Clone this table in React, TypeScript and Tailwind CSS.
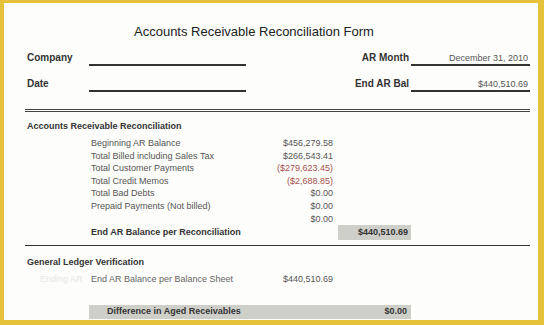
const items: { label: string; amount: string; red?: boolean }[] = [
  { label: "Beginning AR Balance", amount: "$456,279.58" },
  { label: "Total Billed including Sales Tax", amount: "$266,543.41" },
  { label: "Total Customer Payments", amount: "($279,623.45)", red: true },
  { label: "Total Credit Memos", amount: "($2,688.85)", red: true },
  { label: "Total Bad Debts", amount: "$0.00" },
  { label: "Prepaid Payments (Not billed)", amount: "$0.00" },
  { label: "", amount: "$0.00" },
]

function HeaderRow({
  left,
  right,
  value,
  className = "",
}: {
  left: string
  right: string
  value: string
  className?: string
}) {
  return (
    <div className={`flex h-[14px] ${className}`}>
      <div className="w-[64px] pl-[2px] text-[10px] font-bold leading-[12px] text-[#333]">{left}</div>
      <div className="h-[14px] w-[157px] border-b-2 border-[#333]" />
      <div className="flex-1 pr-[2px] text-right text-[10px] font-bold leading-[12px] text-[#333]">{right}</div>
      <div className="h-[14px] w-[119px] border-b-2 border-[#333] pr-[2px] text-right text-[9px] leading-[12px] text-[#555]">
        {value}
      </div>
    </div>
  )
}

export default function App() {
  return (
    <div
      className="h-[325px] w-[544px] bg-[#e6c23a] pb-[5px] pl-[4px] pr-[6px] pt-[3px]"
      style={{ fontFamily: '"Liberation Sans", Arial, sans-serif' }}
    >
      <div className="h-full w-full overflow-hidden bg-[#fdfdfb]">
        <div className="ml-[21px] w-[505px]">
          <div className="mt-[21px] pl-[109px] text-[13px] leading-[16px] text-[#222]">
            Accounts Receivable Reconciliation Form
          </div>

          <HeaderRow className="mt-[12px]" left="Company" right="AR Month" value="December 31, 2010" />
          <HeaderRow className="mt-[12px]" left="Date" right="End AR Bal" value="$440,510.69" />

          <div className="mt-[17px] h-[3px] border-b-[3px] border-double border-[#444]" />

          <div className="mt-[8px] pl-[2px] text-[9px] font-bold leading-[12px] text-[#333]">
            Accounts Receivable Reconciliation
          </div>

          <div className="mt-[5px] pl-[66px]">
            {items.map((it, i) => (
              <div key={i} className="flex h-[12.6px] text-[9px] leading-[12.6px] text-[#555]">
                <div className="w-[184px]">{it.label}</div>
                <div className={`w-[58px] text-right ${it.red ? "text-[#a5514e]" : ""}`}>{it.amount}</div>
              </div>
            ))}
            <div className="flex h-[15px] items-center text-[9px] font-bold text-[#333]">
              <div className="w-[242px]">End AR Balance per Reconciliation</div>
              <div className="ml-[5px] flex h-[15px] w-[73px] items-center justify-end bg-[#cfcfca] pr-[3px]">
                $440,510.69
              </div>
            </div>
          </div>

          <div className="mt-[5px] h-px bg-[#333]" />

          <div className="mt-[10px] pl-[2px] text-[9px] font-bold leading-[12px] text-[#333]">
            General Ledger Verification
          </div>

          <div className="mt-[5px] flex h-[12px] text-[9px] leading-[12px] text-[#666]">
            <div className="w-[66px] pl-[15px] text-[#e6e6e6]">Ending AR</div>
            <div className="w-[184px]">End AR Balance per Balance Sheet</div>
            <div className="w-[58px] text-right text-[#555]">$440,510.69</div>
          </div>

          <div className="ml-[64px] mt-[20px] flex h-[14px] w-[322px] items-center bg-[#cfcfca] pl-[18px] pr-[4px] text-[9px] font-bold text-[#333]">
            <div className="flex-1">Difference in Aged Receivables</div>
            <div>$0.00</div>
          </div>
        </div>
      </div>
    </div>
  )
}
